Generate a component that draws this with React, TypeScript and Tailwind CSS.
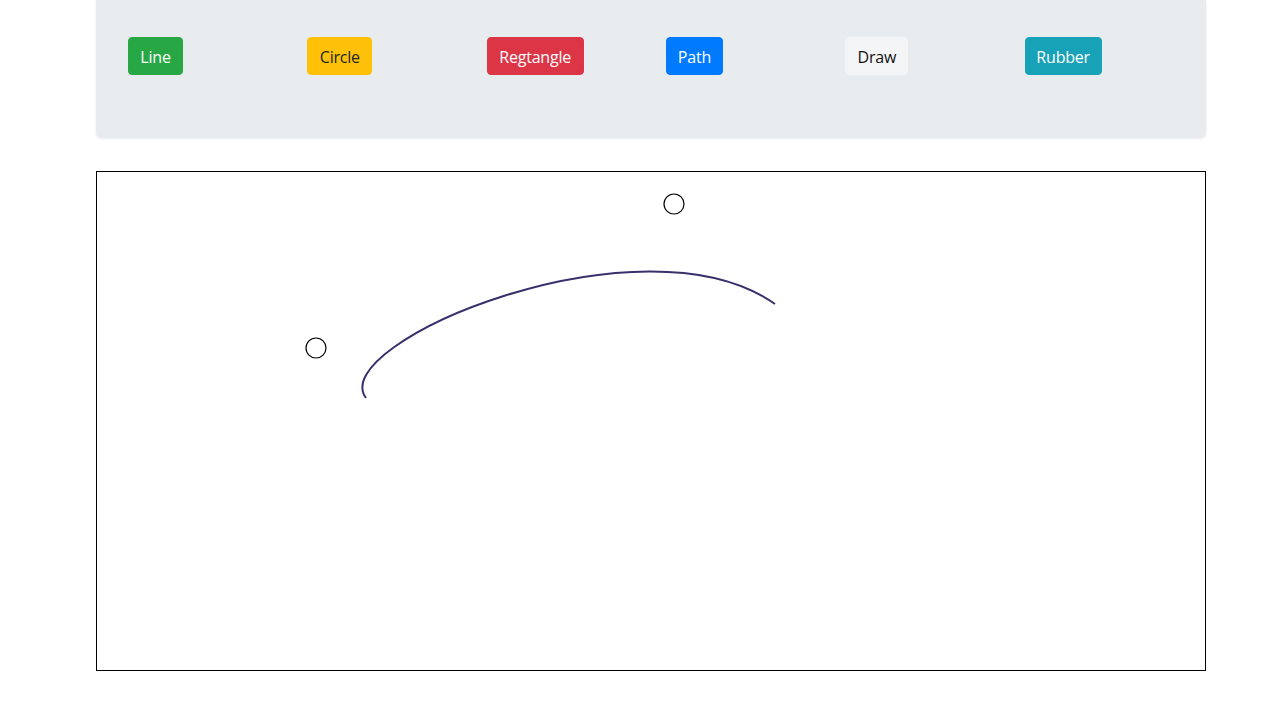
import React from "react";

const buttons = [
  { label: "Line", cls: "bg-[#28a745] border-[#28a745] text-white w-[55px]" },
  { label: "Circle", cls: "bg-[#ffc107] border-[#ffc107] text-[#212529] w-[65px]" },
  { label: "Regtangle", cls: "bg-[#dc3545] border-[#dc3545] text-white w-[97px]" },
  { label: "Path", cls: "bg-[#007bff] border-[#007bff] text-white w-[57px]" },
  { label: "Draw", cls: "bg-[#f4f5f6] border-[#f4f5f6] text-[#111] w-[63px]" },
  { label: "Rubber", cls: "bg-[#17a2b8] border-[#17a2b8] text-white w-[77px]" },
];

export default function App() {
  return (
    <div
      className="min-h-[720px] bg-white"
      style={{ fontFamily: '"Segoe UI", "Open Sans", "Noto Sans", sans-serif' }}
    >
      <div className="w-[1110px] ml-[96px]">
        <div className="h-[138px] bg-[#e9ecef] rounded-b-[5px] shadow-[0_1px_3px_rgba(0,0,0,0.08)] pt-[37px] px-[32px]">
          <div className="grid grid-cols-6 -mx-[15px]">
            {buttons.map((b) => (
              <div key={b.label} className="px-[15px]">
                <button
                  className={`h-[38px] rounded-[4px] border text-[16px] leading-6 text-center tracking-[-0.2px] pt-[1px] ${b.cls}`}
                >
                  {b.label}
                </button>
              </div>
            ))}
          </div>
        </div>
        <div className="mt-[33px] h-[500px] border border-black bg-white">
          <svg width="1108" height="498" viewBox="0 0 1108 498" className="block">
            <circle cx="577" cy="32" r="10" fill="none" stroke="#000" strokeWidth="1.2" />
            <circle cx="219" cy="176" r="10" fill="none" stroke="#000" strokeWidth="1.2" />
            <path
              d="M 269 226 C 228 172, 545 38, 678 132"
              fill="none"
              stroke="#37306b"
              strokeWidth="2"
            />
          </svg>
        </div>
      </div>
    </div>
  );
}
